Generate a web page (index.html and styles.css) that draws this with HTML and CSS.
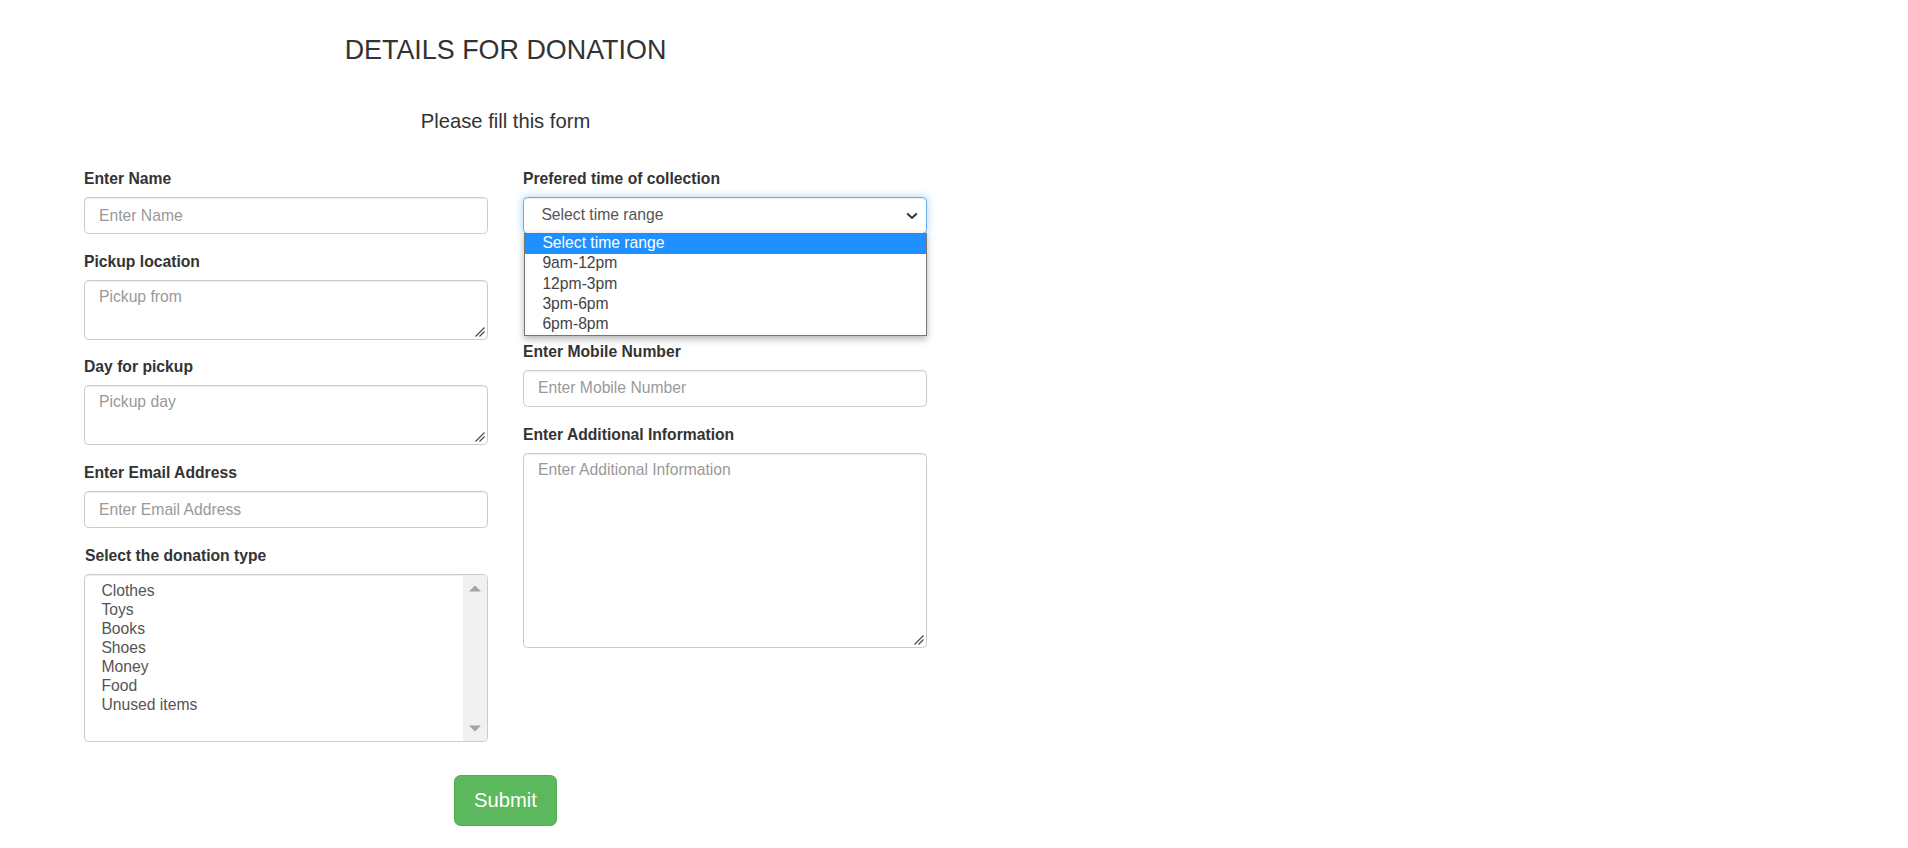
FILE: index.html
```html
<!DOCTYPE html>
<html lang="en">
<head>
<meta charset="utf-8">
<title>Details for Donation</title>
<link rel="stylesheet" href="styles.css">
</head>
<body>
<div class="page">
  <h1 class="title">DETAILS FOR DONATION</h1>
  <h2 class="subtitle">Please fill this form</h2>
  <form class="form-grid">
    <div class="col">
      <div class="group">
        <label class="label">Enter Name</label>
        <input class="control" type="text" placeholder="Enter Name">
      </div>
      <div class="group">
        <label class="label">Pickup location</label>
        <div class="area-wrap">
          <textarea class="control area-sm" placeholder="Pickup from"></textarea>
          <svg class="grip" width="10" height="10" viewBox="0 0 10 10"><path d="M0.5 9.5 L9.5 0.5 M4.5 9.5 L9.5 4.5" stroke="#444" stroke-width="1.1" fill="none"/></svg>
        </div>
      </div>
      <div class="group">
        <label class="label">Day for pickup</label>
        <div class="area-wrap">
          <textarea class="control area-sm" placeholder="Pickup day"></textarea>
          <svg class="grip" width="10" height="10" viewBox="0 0 10 10"><path d="M0.5 9.5 L9.5 0.5 M4.5 9.5 L9.5 4.5" stroke="#444" stroke-width="1.1" fill="none"/></svg>
        </div>
      </div>
      <div class="group">
        <label class="label">Enter Email Address</label>
        <input class="control" type="text" placeholder="Enter Email Address">
      </div>
      <div class="group last">
        <label class="label label-shift">Select the donation type</label>
        <div class="listbox">
          <div class="list-items">
            <div class="list-item">Clothes</div>
            <div class="list-item">Toys</div>
            <div class="list-item">Books</div>
            <div class="list-item">Shoes</div>
            <div class="list-item">Money</div>
            <div class="list-item">Food</div>
            <div class="list-item">Unused items</div>
          </div>
          <div class="scrollbar">
            <svg class="sb-arrow" width="12" height="7" viewBox="0 0 12 7"><path d="M0 6.5 L6 0.5 L12 6.5 Z" fill="#a3a3a3"/></svg>
            <svg class="sb-arrow" width="12" height="7" viewBox="0 0 12 7"><path d="M0 0.5 L6 6.5 L12 0.5 Z" fill="#a3a3a3"/></svg>
          </div>
        </div>
      </div>
    </div>
    <div class="col">
      <div class="group">
        <label class="label">Prefered time of collection</label>
        <div class="select-wrap">
          <div class="select">
            <span>Select time range</span>
            <svg class="chev" width="12" height="8" viewBox="0 0 12 8"><path d="M1.2 1.5 L6 6 L10.8 1.5" fill="none" stroke="#333" stroke-width="2"/></svg>
          </div>
          <div class="dropdown">
            <div class="opt selected">Select time range</div>
            <div class="opt">9am-12pm</div>
            <div class="opt">12pm-3pm</div>
            <div class="opt">3pm-6pm</div>
            <div class="opt">6pm-8pm</div>
          </div>
        </div>
      </div>
      <div class="group hidden-group"></div>
      <div class="group">
        <label class="label">Enter Mobile Number</label>
        <input class="control" type="text" placeholder="Enter Mobile Number">
      </div>
      <div class="group last">
        <label class="label">Enter Additional Information</label>
        <div class="area-wrap">
          <textarea class="control area-lg" placeholder="Enter Additional Information"></textarea>
          <svg class="grip" width="10" height="10" viewBox="0 0 10 10"><path d="M0.5 9.5 L9.5 0.5 M4.5 9.5 L9.5 4.5" stroke="#444" stroke-width="1.1" fill="none"/></svg>
        </div>
      </div>
    </div>
  </form>
  <div class="actions">
    <button class="btn-submit" type="button">Submit</button>
  </div>
</div>
</body>
</html>
```

FILE: styles.css
```css
html, body {
  margin: 0;
  padding: 0;
  background: #fff;
}
body {
  font-family: "Liberation Sans", Arial, Helvetica, sans-serif;
  color: #333;
  font-size: 15.7px;
  line-height: 22px;
  overflow: hidden;
}
.page {
  width: 843px;
  margin-left: 84px;
  padding-top: 36px;
}
.title {
  margin: 0;
  font-size: 26.9px;
  line-height: 29px;
  font-weight: 400;
  text-align: center;
  color: #333;
}
.subtitle {
  margin: 46.4px 0 0;
  font-size: 20.2px;
  line-height: 21.8px;
  font-weight: 400;
  text-align: center;
  color: #333;
}
.form-grid {
  margin: 34.8px 0 0;
  display: grid;
  grid-template-columns: 1fr 1fr;
  column-gap: 35px;
  align-items: start;
}
.col {
  display: flex;
  flex-direction: column;
}
.group {
  margin-bottom: 16.5px;
}
.group.last {
  margin-bottom: 0;
}
.hidden-group {
  height: 73.3px;
}
.label {
  display: block;
  font-weight: 700;
  font-size: 15.7px;
  line-height: 22px;
  margin-bottom: 7px;
  color: #333;
}
.label-shift {
  padding-left: 1px;
}
.control {
  display: block;
  box-sizing: border-box;
  width: 100%;
  height: 37.4px;
  padding: 6.6px 14px;
  font-family: "Liberation Sans", Arial, Helvetica, sans-serif;
  font-size: 15.7px;
  line-height: 22px;
  color: #555;
  background: #fff;
  border: 1px solid #ccc;
  border-radius: 4.4px;
  box-shadow: inset 0 1px 1px rgba(0,0,0,.075);
  margin: 0;
  outline: none;
}
.control::placeholder {
  color: #999;
  opacity: 1;
}
.area-wrap {
  position: relative;
}
textarea.control {
  resize: none;
  padding-top: 5px;
}
.grip {
  position: absolute;
  right: 3px;
  bottom: 3px;
  display: block;
}
.area-sm {
  height: 60px;
}
.area-lg {
  height: 195px;
}
.listbox {
  box-sizing: border-box;
  height: 168px;
  border: 1px solid #ccc;
  border-radius: 4.4px;
  box-shadow: inset 0 1px 1px rgba(0,0,0,.075);
  display: flex;
  overflow: hidden;
  background: #fff;
}
.list-items {
  flex: 1;
  padding: 6.2px 0 0 16.4px;
}
.list-item {
  font-size: 15.7px;
  line-height: 19px;
  height: 19px;
  color: #555;
}
.scrollbar {
  width: 24px;
  background: #f1f1f1;
  display: flex;
  flex-direction: column;
  justify-content: space-between;
  align-items: center;
  padding: 10px 0 9px;
}
.sb-arrow {
  display: block;
}
.select-wrap {
  position: relative;
}
.select {
  box-sizing: border-box;
  height: 37.4px;
  padding: 0 8px 0 17.4px;
  border: 1px solid #66afe9;
  border-radius: 4.4px;
  box-shadow: inset 0 1px 1px rgba(0,0,0,.075), 0 0 8.8px rgba(102,175,233,.6);
  display: flex;
  align-items: center;
  justify-content: space-between;
  color: #555;
  font-size: 15.7px;
  background: #fff;
}
.select span {
  margin-top: -1px;
}
.chev {
  display: block;
}
.dropdown {
  position: absolute;
  top: calc(100% - 1.4px);
  left: 1px;
  right: 0;
  background: #fff;
  border: 1px solid #767676;
  box-shadow: 0 3px 7px rgba(0,0,0,.3);
  z-index: 10;
}
.opt {
  box-sizing: border-box;
  height: 20.3px;
  line-height: 18.3px;
  padding: 0 0 2px 17.4px;
  font-size: 15.7px;
  color: #444;
}
.opt.selected {
  background: #1e90ff;
  color: #fff;
}
.actions {
  margin-top: 33px;
  display: flex;
  justify-content: center;
}
.btn-submit {
  font-family: "Liberation Sans", Arial, Helvetica, sans-serif;
  font-size: 20.2px;
  line-height: 26.4px;
  padding: 11.6px 18.6px;
  color: #fff;
  background: #5cb85c;
  border: 1px solid #4cae4c;
  border-radius: 6.6px;
  cursor: pointer;
}
```
